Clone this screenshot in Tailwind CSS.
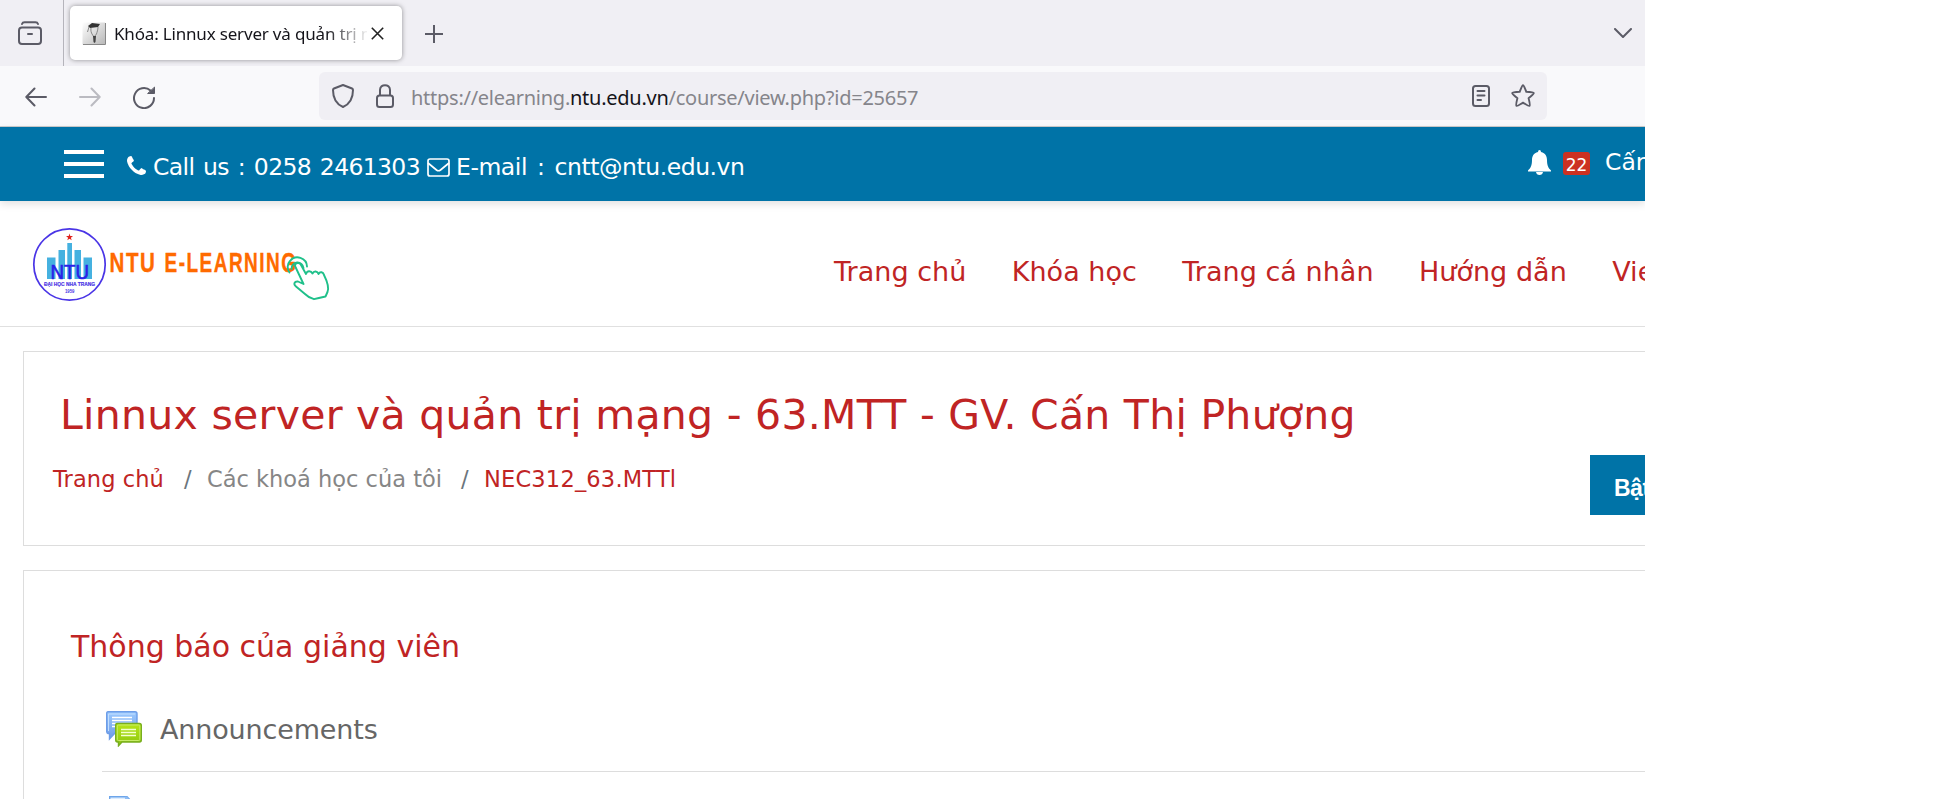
<!DOCTYPE html>
<html lang="vi">
<head>
<meta charset="utf-8">
<title>Khóa: Linnux server và quản trị mạng</title>
<script src="https://cdn.jsdelivr.net/npm/@tailwindcss/browser@4"></script>
</head>
<body class="bg-white">
<div class="w-[1645px] h-[799px] overflow-hidden flex flex-col font-['DejaVu_Sans',sans-serif] whitespace-nowrap">
  <!-- tab strip -->
  <div class="h-[66px] shrink-0 bg-[#f0eff4] flex items-center font-['Noto_Sans',sans-serif]">
    <div class="w-16 h-full shrink-0 border-r border-[#b5b4bb] pl-[18px] pt-[21px]">
      <svg class="w-6 h-6" viewBox="0 0 24 24" fill="none" stroke="#5b5b66" stroke-width="2" stroke-linecap="round"><path d="M4 3C4.500 1.500 5.500 1.200 6.500 1.200H17.500C18.500 1.200 19.500 1.500 20 3"/><rect x="1" y="6.500" width="22" height="16.500" rx="3"/><path d="M10 13H14"/></svg>
    </div>
    <div class="ml-[6px] w-[332px] h-[54px] shrink-0 bg-white rounded-[5px] shadow-[0_0_5px_rgba(0,0,0,0.4)] flex items-center">
      <svg class="w-6 h-6 ml-[12px] mt-[2px] shrink-0" viewBox="0 0 24 24"><defs><linearGradient id="fav" x1="0" y1="0" x2="1" y2="1"><stop offset="0" stop-color="#fff"/><stop offset="1" stop-color="#b8b8b8"/></linearGradient></defs><rect x=".5" y=".5" width="22.500" height="22" fill="url(#fav)"/><path d="M23.500 1V22.500H1" fill="none" stroke="#888"/><path d="M6 4L10 1L18 2L16 5L8 6Z" fill="#333"/><path d="M7 5L5.500 10M9 6C8.500 9 9.500 11 10 12M16 5C16 8 15 10 14.500 12M10 12L12 15L14.500 12" fill="none" stroke="#888"/><path d="M11 14H14L13.500 20L12.500 21L11.500 20Z" fill="#444"/></svg>
      <div class="ml-[8px] mt-[2px] w-[253px] overflow-hidden text-[17px] tracking-[-0.18px] text-[#15141a] [mask-image:linear-gradient(to_right,#000_212px,transparent_256px)]">Khóa: Linnux server và quản trị mạng</div>
      <svg class="w-[13px] h-[13px] ml-[4px] shrink-0" viewBox="0 0 13 13" stroke="#222" stroke-width="1.600"><path d="M.8.800L12.200 12.200M12.200.8L.8 12.200"/></svg>
    </div>
    <svg class="w-[18px] h-[18px] ml-[23px] mt-[2px]" viewBox="0 0 18 18" stroke="#5b5b66" stroke-width="2"><path d="M9 0V18M0 9H18"/></svg>
    <svg class="w-[18px] h-[10px] ml-auto mr-[13px]" viewBox="0 0 18 10" fill="none" stroke="#5b5b66" stroke-width="2" stroke-linecap="round" stroke-linejoin="round"><path d="M1 1L9 9L17 1"/></svg>
  </div>
  <!-- address bar -->
  <div class="h-[61px] shrink-0 bg-[#f9f9fb] border-b border-[#ccc] flex items-center font-['Noto_Sans',sans-serif]">
    <svg class="w-[22px] h-[20px] ml-[25px] mt-[2px]" viewBox="0 0 22 20" fill="none" stroke="#5b5b66" stroke-width="2" stroke-linecap="round" stroke-linejoin="round"><path d="M21 10H1.500M9.500 1.500L1.300 10L9.500 18.500"/></svg>
    <svg class="w-[22px] h-[20px] ml-[32px] mt-[2px]" viewBox="0 0 22 20" fill="none" stroke="#bbbbc1" stroke-width="2" stroke-linecap="round" stroke-linejoin="round"><path d="M1 10H20.500M12.500 1.500L20.700 10L12.500 18.500"/></svg>
    <svg class="w-[23px] h-[23px] ml-[32px] mt-[3px]" viewBox="0 0 23 23" fill="none" stroke="#5b5b66" stroke-width="2" stroke-linecap="round"><path d="M21 12A10 10 0 1 1 17.500 4.500"/><path d="M21.500 1.500V7.500H15Z" fill="#5b5b66" stroke-width="1" stroke-linejoin="round"/></svg>
    <div class="ml-[163px] w-[1228px] h-[48px] bg-[#f0eff4] rounded-[6px] flex items-center">
      <svg class="w-[22px] h-[24px] ml-[13px]" viewBox="0 0 22 24" fill="none" stroke="#5b5b66" stroke-width="2" stroke-linejoin="round"><path d="M11 1L20 4.500Q21 5 21 6C21 13 19 19.500 11 23C3 19.500 1 13 1 6Q1 5 2 4.500Z"/></svg>
      <svg class="w-[18px] h-[24px] ml-[22px]" viewBox="0 0 18 24" fill="none" stroke="#5b5b66" stroke-width="2"><rect x="1" y="11.500" width="16" height="11.500" rx="2.500"/><path d="M4 11.500V6C4 -.5 14 -.5 14 6V11.500"/></svg>
      <div class="ml-[17px] mt-[3px] text-[20px] tracking-[-0.26px] text-[#85858b]">https://elearning.<span class="text-[#15141a]">ntu.edu.vn</span>/course/view.php?id=25657</div>
      <svg class="w-[18px] h-[22px] ml-auto mr-[21px]" viewBox="0 0 18 22" fill="none" stroke="#5b5b66" stroke-width="2" stroke-linecap="round"><rect x="1" y="1" width="16" height="20" rx="2.500"/><path d="M5.500 6H12.500M5.500 10.500H12.500M5.500 15H9"/></svg>
      <svg class="w-6 h-6 mr-[12px]" viewBox="0 0 24 24" fill="none" stroke="#5b5b66" stroke-width="1.900" stroke-linejoin="round"><path d="M12 1.200C12.800 1.200 13 2 15.300 7.800C21.500 8.200 22.500 8.300 22.800 9C23.100 9.800 22.300 10.300 17.600 14.300C19.100 20.300 19.300 21.300 18.600 21.800C17.800 22.400 17.200 21.800 12 18.600C6.800 21.800 6.200 22.400 5.400 21.800C4.700 21.300 4.900 20.300 6.400 14.300C1.700 10.300.9 9.800 1.200 9C1.500 8.300 2.500 8.200 8.700 7.800C11 2 11.200 1.200 12 1.200Z"/></svg>
    </div>
  </div>
  <!-- contact bar -->
  <div class="h-[74px] shrink-0 bg-[#0073a7] text-white text-[23.5px] shadow-[0_3px_8px_rgba(0,0,0,0.12)] flex items-center">
    <div class="ml-16 w-10 h-7 flex flex-col justify-between shrink-0"><i class="h-1 bg-white"></i><i class="h-1 bg-white"></i><i class="h-1 bg-white"></i></div>
    <svg class="w-[19px] h-[19px] ml-[23px] mt-[3px] shrink-0" viewBox="0 0 1408 1408"><path fill="#fff" d="M1408 1112q0 27-10 70.500t-21 68.500q-21 50-122 106-94 51-186 51-27 0-53-3.500t-57.500-12.500-47-14.500-55.500-20.500-49-18q-98-35-175-83-127-79-264-216t-216-264q-48-77-83-175-3-9-18-49t-20.500-55.500-14.500-47-12.500-57.500-3.500-53q0-92 51-186 56-101 106-122 25-11 68.500-21t70.500-10q14 0 21 3 18 6 53 76 11 19 30 54t35 63.500 31 53.500q3 4 17.500 25t21.500 35.500 7 28.500q0 20-28.500 50t-62 55-62 53-28.500 46q0 9 5 22.500t8.500 20.500 14 24 11.500 19q76 137 174 235t235 174q2 1 19 11.500t24 14 20.500 8.500 22.500 5q18 0 46-28.500t53-62 55-62 50-28.500q14 0 28.500 7t35.500 21.500 25 17.500q25 15 53.500 31t63.500 35 54 30q70 35 76 53 3 7 3 21z"/></svg>
    <div class="ml-[7px] mt-[7px] w-[267px] tracking-[-0.65px] [word-spacing:2px]">Call us : 0258 2461303</div>
    <svg class="w-[23px] h-[19px] ml-[7px] mt-[7px]" viewBox="0 0 23 19" fill="none" stroke="#fff" stroke-width="1.700"><rect x="1" y="1" width="21" height="17" rx="2"/><path d="M1 5L9.500 12Q11.500 13.500 13.500 12L22 5"/></svg>
    <div class="ml-[6px] mt-[7px] tracking-[-0.45px] [word-spacing:3px]">E-mail : cntt@ntu.edu.vn</div>
    <svg class="w-[23px] h-[25px] ml-auto -mt-[3px]" viewBox="0 0 23 25" fill="#fff"><path d="M11.500 0Q13 0 13 2C17.500 3 19 6.500 19 10C19 16 20.500 18 23 20.500V21.500H0V20.500C2.500 18 4 16 4 10C4 6.500 5.500 3 10 2Q10 0 11.500 0ZM8 22H15Q14.500 25 11.500 25Q8.500 25 8 22Z"/></svg>
    <div class="ml-[12px] w-[27px] h-[23px] -mt-px bg-[#cc3122] rounded-[3px] text-[17px] leading-[27px] text-center">22</div>
    <div class="ml-[15px] -mt-[3px] w-[40px] overflow-hidden">Cấn</div>
  </div>
  <!-- logo and menu -->
  <div class="h-[126px] shrink-0 border-b border-[#e0e0e0] flex">
    <svg class="w-[305px] h-[80px] ml-[30px] mt-[24px] shrink-0" viewBox="30 225 305 80" font-family="Liberation Sans, sans-serif">
      <circle cx="69.500" cy="264.500" r="35.700" fill="#fff" stroke="#4a35e6" stroke-width="1.700"/>
      <path d="M69.500 233.500L70.300 236H73L70.900 237.700L71.700 240.300L69.500 238.700L67.300 240.300L68.100 237.700L66 236H68.700Z" fill="#e0221c"/>
      <path d="M47 257.500H55.500V279H47ZM58.500 250H65V279H58.500ZM67.300 243H72V279H67.300ZM74.500 250H81V279H74.500ZM83.500 257.500H92V279H83.500Z" fill="#45b1e0"/>
      <text x="50.500" y="279" font-size="20" textLength="38.500" lengthAdjust="spacingAndGlyphs" fill="#2a1fe8" stroke="#2a1fe8" stroke-width=".6">NTU</text>
      <text x="44" y="286.300" font-size="5.600" font-weight="bold" textLength="51" lengthAdjust="spacingAndGlyphs" fill="#4a35e6" stroke="#4a35e6" stroke-width=".2">ĐẠI HỌC NHA TRANG</text>
      <text x="65" y="292.700" font-size="4.800" font-weight="bold" textLength="9.500" lengthAdjust="spacingAndGlyphs" fill="#4a35e6">1959</text>
      <g font-size="28.500" font-weight="bold" letter-spacing="2.200" fill="#ff6a00" stroke="#ff6a00" stroke-width=".4">
        <text x="109.500" y="272.300" textLength="47" lengthAdjust="spacingAndGlyphs">NTU</text>
        <text x="164.500" y="272.300" textLength="133" lengthAdjust="spacingAndGlyphs">E-LEARNING</text>
      </g>
      <g fill="none" stroke="#1fc08a" stroke-width="1.900" stroke-linecap="round" stroke-linejoin="round">
        <path d="M291.500 269A6 6 0 1 1 303.500 268M289.500 272.500A9 9 0 0 1 290 261A9.500 9.500 0 0 1 307 266.500"/>
        <path d="M295 266C295 262.500 299.500 262 301 265L306 274C307 270.500 311 270.500 312.500 273.500C314 270.500 317.500 271 318.500 274C320 271 323.500 272 324 275C327 281 329.500 287 327.500 292L325.500 296.500Q318 298 314 299.200Q309 298 305 294L296 286.500C293 284 294.500 281 298 281.500L303.500 284Z" fill="#fff"/>
      </g>
    </svg>
    <nav class="ml-[499px] mt-[51px] flex gap-[45.4px] text-[27px] tracking-[0.03px] text-[#c02424]"><span>Trang chủ</span><span>Khóa học</span><span>Trang cá nhân</span><span>Hướng dẫn</span><span>Vie</span></nav>
  </div>
  <!-- course header -->
  <div class="mt-[24px] ml-[23px] h-[195px] shrink-0 border border-r-0 border-[#ddd] pt-[33px] text-[#c02424]">
    <h1 class="ml-[36px] text-[41px] leading-[60px] tracking-[0.27px]">Linnux server và quản trị mạng - 63.MTT - GV. Cấn Thị Phượng</h1>
    <div class="mt-[10px] flex">
      <div class="mt-[9px] ml-[29px] flex text-[22.5px] leading-[30px]">
        <span class="w-[131px] tracking-[0.1px]">Trang chủ</span><span class="w-[23px] text-[#6c757d]">/</span>
        <span class="w-[254px] text-[#868686]">Các khoá học của tôi</span><span class="w-[23px] text-[#6c757d]">/</span>
        <span class="tracking-[0.2px]">NEC312_63.MTTl</span>
      </div>
      <div class="ml-auto w-[55px] h-[60px] overflow-hidden bg-[#0073a7] pl-[24px] text-white text-[23px] tracking-[-0.5px] font-bold leading-[66px] font-['Liberation_Sans',sans-serif]">Bật</div>
    </div>
  </div>
  <!-- course content -->
  <div class="mt-[24px] ml-[23px] h-[260px] shrink-0 border border-r-0 border-[#ddd] pt-[56px]">
    <h2 class="ml-[47px] text-[30px] leading-[40px] text-[#c02424]">Thông báo của giảng viên</h2>
    <div class="ml-[78px] mt-[33px] h-[72px] border-b border-[#ddd] flex pt-[10px]">
      <svg class="w-[36px] h-[36px] ml-[4px] mt-px" viewBox="0 0 36 36"><defs><linearGradient id="blue" x1="0" y1="0" x2="0" y2="1"><stop offset="0" stop-color="#9ccaff"/><stop offset="1" stop-color="#6f9be6"/></linearGradient><linearGradient id="green" x1="0" y1="0" x2="0" y2="1"><stop offset="0" stop-color="#b7e619"/><stop offset="1" stop-color="#8cc410"/></linearGradient></defs><path d="M2 .7H29Q31 .7 31 2.700V22H9L3.500 28V22.500H2Q.7 22 .7 20.500V2.500Q.7 .7 2 .7Z" fill="url(#blue)" stroke="#6d9de8" stroke-width="1.400"/><path d="M2.500 20V3H29" fill="none" stroke="#c3dfff"/><path d="M6 6.500H26M6 9.500H26M6 12.500H26M6 15.500H10" stroke="#fff" stroke-width="1.300"/><path d="M11 12.500H33.500Q35.300 12.500 35.300 14.500V29Q35.300 31 33.500 31H16L12.500 34.800V31H11.500Q9.700 31 9.700 29V14Q9.700 12.500 11 12.500Z" fill="url(#green)" stroke="#78ae1f" stroke-width="1.400"/><rect x="11.300" y="14" width="22.500" height="15.500" rx="1" fill="none" stroke="#c8ec6a"/><path d="M15 18.500H30M15 21.500H30M15 24.500H30" stroke="#f4ffd0" stroke-width="1.300"/></svg>
      <span class="ml-[18px] text-[27px] leading-[40px] tracking-[-0.15px] text-[#666]">Announcements</span>
    </div>
    <svg class="w-[25px] h-[30px] ml-[85px] mt-[24px]" viewBox="0 0 25 30"><path d="M.7 .7H18L24 7V29H.7Z" fill="#dcecff" stroke="#6da5ea" stroke-width="1.400"/><path d="M16 .7V8H24L18 .7Z" fill="#8fbdf5"/></svg>
  </div>
</div>
</body>
</html>
